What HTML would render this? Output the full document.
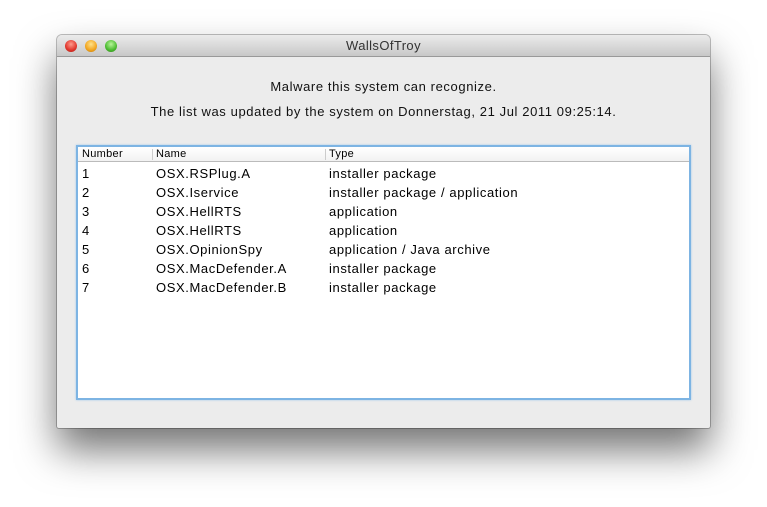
<!DOCTYPE html>
<html><head><style>
body{margin:0;width:767px;height:507px;background:#fff;position:relative;overflow:hidden;font-family:"Liberation Sans",sans-serif;}
.win{position:absolute;left:57px;top:35px;width:653px;height:393px;background:#ececec;border-radius:5px 5px 2px 2px;box-shadow:0 22px 40px rgba(0,0,0,.55),0 0 0 1px rgba(0,0,0,.25);overflow:hidden}
.tb{height:21px;background:linear-gradient(#ebebeb,#c8c8c8);border-bottom:1px solid #999;text-align:center;font-size:13px;line-height:22px;color:#333;letter-spacing:0.4px}
.b{position:absolute;top:5px;width:12px;height:12px;border-radius:50%}
.t{position:absolute;left:0;width:653px;text-align:center;font-size:13px;color:#111;letter-spacing:0.6px}
.tbl{position:absolute;left:19px;top:110px;width:611px;height:251px;background:#fff;border:2px solid #7db4e3;box-shadow:0 0 2px #9cc7ee}
.hd{height:14px;border-bottom:1px solid #bbb;font-size:11px;line-height:14px;position:relative;background:linear-gradient(#fff,#f2f2f2);letter-spacing:0.3px}
.hd span,.r span{position:absolute}
.r{height:19px;position:relative;font-size:13px;line-height:19px;color:#000;letter-spacing:0.6px}
.sep{position:absolute;top:2px;width:1px;height:11px;background:#ccc}
</style></head><body>
<div class="win">
<div class="tb">WallsOfTroy</div>
<div class="b" style="left:8px;background:radial-gradient(circle at 50% 35%,#ff9a8c,#e0352b 60%,#a51d15)"></div>
<div class="b" style="left:28px;background:radial-gradient(circle at 50% 35%,#ffe28a,#f2a51f 60%,#b8760a)"></div>
<div class="b" style="left:48px;background:radial-gradient(circle at 50% 35%,#b8f59a,#4bbb30 60%,#2a7d17)"></div>
<div class="t" style="top:44px">Malware this system can recognize.</div>
<div class="t" style="top:69px">The list was updated by the system on Donnerstag, 21 Jul 2011 09:25:14.</div>
<div class="tbl">
<div class="hd"><span style="left:4px">Number</span><div class="sep" style="left:74px"></div><span style="left:78px">Name</span><div class="sep" style="left:247px"></div><span style="left:251px">Type</span></div>
<div class="r" style="margin-top:2px"><span style="left:4px">1</span><span style="left:78px">OSX.RSPlug.A</span><span style="left:251px">installer package</span></div>
<div class="r"><span style="left:4px">2</span><span style="left:78px">OSX.Iservice</span><span style="left:251px">installer package / application</span></div>
<div class="r"><span style="left:4px">3</span><span style="left:78px">OSX.HellRTS</span><span style="left:251px">application</span></div>
<div class="r"><span style="left:4px">4</span><span style="left:78px">OSX.HellRTS</span><span style="left:251px">application</span></div>
<div class="r"><span style="left:4px">5</span><span style="left:78px">OSX.OpinionSpy</span><span style="left:251px">application / Java archive</span></div>
<div class="r"><span style="left:4px">6</span><span style="left:78px">OSX.MacDefender.A</span><span style="left:251px">installer package</span></div>
<div class="r"><span style="left:4px">7</span><span style="left:78px">OSX.MacDefender.B</span><span style="left:251px">installer package</span></div>
</div>
</div>
</body></html>
